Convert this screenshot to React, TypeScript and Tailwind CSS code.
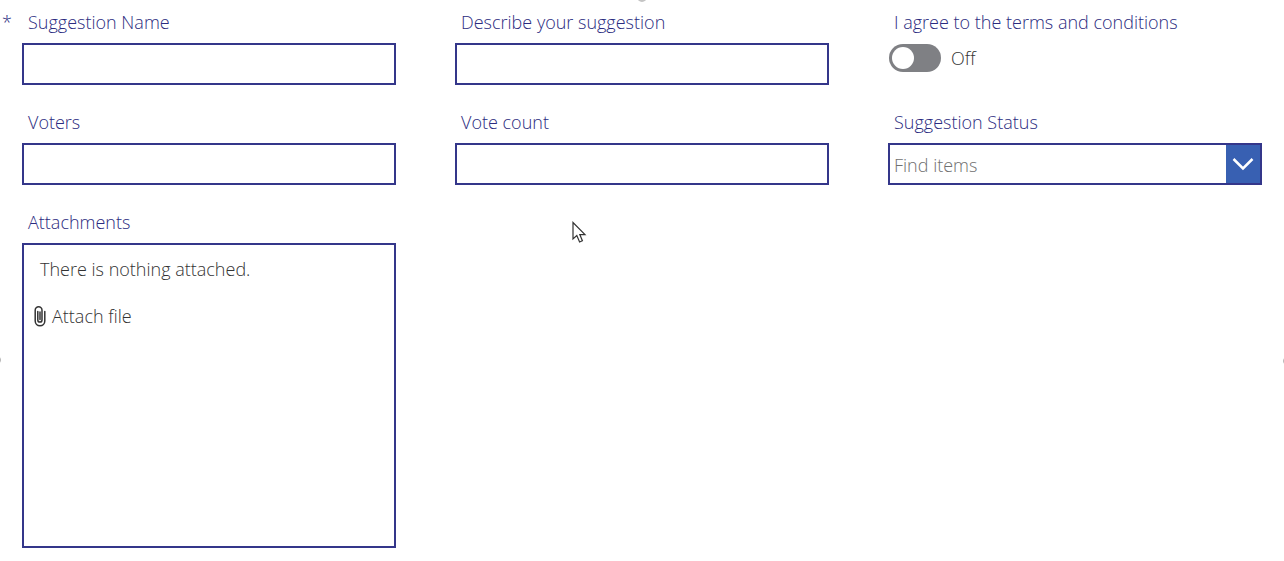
import React, { useState } from "react";

const labelClass = "block h-6 pl-1.5 text-lg leading-6 text-[#2b2b80]";
const boxClass = "w-full border-2 border-[#34368a] bg-white";

type TextFieldProps = {
  id: string;
  label: string;
  required?: boolean;
};

const TextField = ({ id, label, required }: TextFieldProps) => (
  <div className="relative flex flex-col gap-[9px]">
    {required && (
      <span className="absolute -left-5 top-0 text-lg leading-6 text-[#2b2b80]">*</span>
    )}
    <label htmlFor={id} className={labelClass}>{label}</label>
    <input id={id} type="text" required={required} className={`${boxClass} h-[42px] px-1.5 text-lg`} />
  </div>
);

const AgreeToggle = () => {
  const [on, setOn] = useState(false);

  return (
    <div className="flex flex-col gap-[9px]">
      <label htmlFor="agree" className={labelClass}>I agree to the terms and conditions</label>
      <div className="flex items-center gap-2.5 pt-px pl-px">
        <input
          id="agree"
          type="checkbox"
          role="switch"
          checked={on}
          onChange={(e) => setOn(e.target.checked)}
          className="h-7 w-[52px] appearance-none rounded-full bg-[#7f8084] p-[3px] before:block before:size-[22px] before:rounded-full before:bg-white checked:bg-[#3860b2] checked:before:ml-6"
        />
        <span className="text-lg leading-7 text-[#333333]">{on ? "On" : "Off"}</span>
      </div>
    </div>
  );
};

const StatusSelect = () => (
  <div className="flex flex-col gap-[9px]">
    <label htmlFor="status" className={labelClass}>Suggestion Status</label>
    <div className="relative">
      <select id="status" className={`${boxClass} h-[42px] appearance-none pt-0.5 pl-1 pr-10 text-lg text-[#707070]`}>
        <option>Find items</option>
      </select>
      <div className="pointer-events-none absolute inset-y-0.5 right-0.5 flex w-[34px] items-center justify-center bg-[#3860b2]">
        <svg width="22" height="14" viewBox="0 0 22 14" fill="none" stroke="white" strokeWidth="2.5">
          <path d="M1.5 2L11 11.5L20.5 2" />
        </svg>
      </div>
    </div>
  </div>
);

const Attachments = () => (
  <section className="flex flex-col gap-[9px]">
    <h2 className={labelClass}>Attachments</h2>
    <div className={`${boxClass} h-[305px] pt-2.5 pl-2.5 text-lg text-[#333333]`}>
      <p className="pl-1.5 leading-7">There is nothing attached.</p>
      <button type="button" className="mt-[19px] flex items-center gap-1.5 leading-7">
        <svg width="12" height="22" viewBox="0 0 12 22" fill="none" stroke="currentColor" strokeWidth="1.5" strokeLinecap="round">
          <path d="M3.8 6.5V15a2.1 2.1 0 0 0 4.2 0V5.2a3.4 3.4 0 0 0-6.8 0V16a4.8 4.8 0 0 0 9.6 0V6.5" />
          <path d="M6 7V14.5" />
        </svg>
        Attach file
      </button>
    </div>
  </section>
);

const App = () => {
  return (
    <main className="relative overflow-hidden bg-white px-[22px] pt-2.5 pb-[13px] font-['Open_Sans',sans-serif] font-light">
      <form className="grid grid-cols-3 gap-x-[59px] gap-y-[25px]">
        <TextField id="name" label="Suggestion Name" required />
        <TextField id="description" label="Describe your suggestion" />
        <AgreeToggle />
        <TextField id="voters" label="Voters" />
        <TextField id="count" label="Vote count" />
        <StatusSelect />
        <Attachments />
      </form>

      {/* resize handles of the form, mostly outside the view */}
      <span className="absolute -top-2 left-1/2 size-2.5 -translate-x-1/2 rounded-full border-2 border-[#c4c4c4]" />
      <span className="absolute top-[355px] -left-[9px] size-2.5 rounded-full border border-[#b5b5b5]" />
      <span className="absolute top-[356px] -right-[9px] size-2.5 rounded-full border border-[#b5b5b5]" />

      {/* mouse pointer */}
      <svg className="absolute top-[221px] left-[571px]" width="16" height="24" viewBox="0 0 16 24" fill="white" stroke="#333333" strokeWidth="1.2">
        <path d="M2 1.5V18L5.8 14.6L8.6 21L11.4 19.8L8.8 13.6H14Z" />
      </svg>
    </main>
  );
};

export default App;
